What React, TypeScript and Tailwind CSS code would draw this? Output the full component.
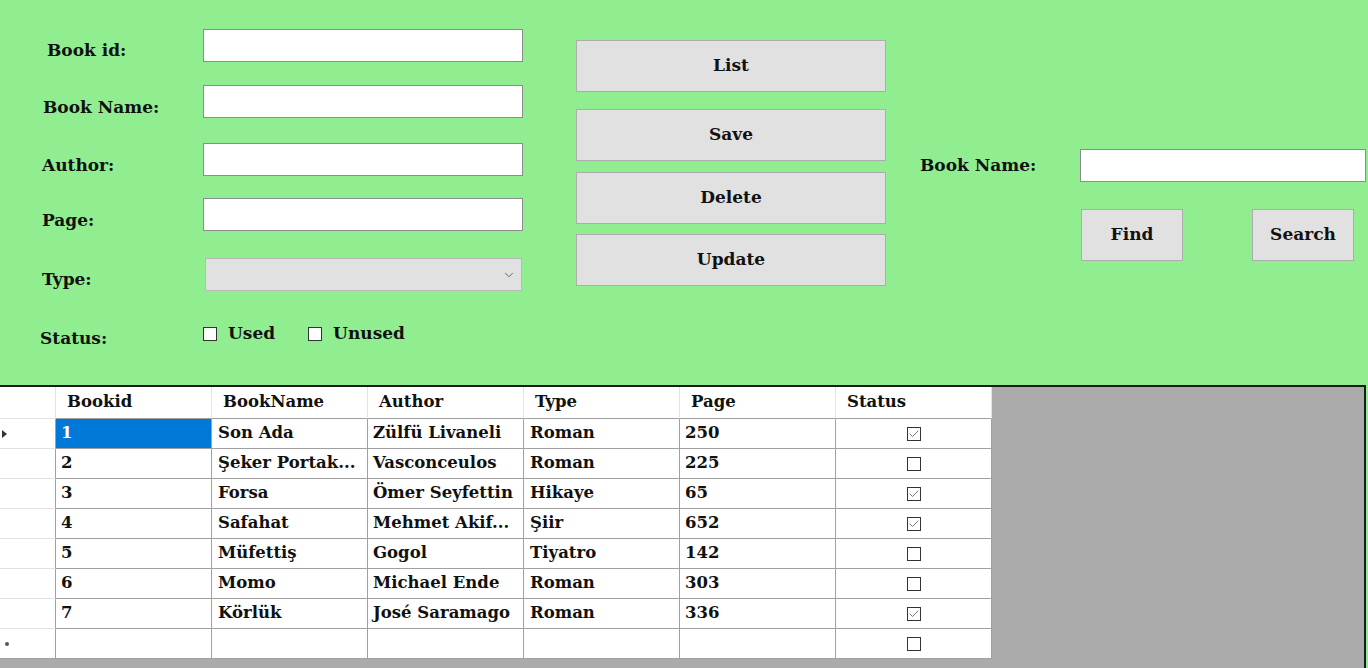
import { Check, ChevronDown } from 'lucide-react';

type Book = {
  id: string;
  name: string;
  author: string;
  type: string;
  page: string;
  used: boolean;
};

const books: Book[] = [
  { id: '1', name: 'Son Ada', author: 'Zülfü Livaneli', type: 'Roman', page: '250', used: true },
  { id: '2', name: 'Şeker Portak...', author: 'Vasconceulos', type: 'Roman', page: '225', used: false },
  { id: '3', name: 'Forsa', author: 'Ömer Seyfettin', type: 'Hikaye', page: '65', used: true },
  { id: '4', name: 'Safahat', author: 'Mehmet Akif...', type: 'Şiir', page: '652', used: true },
  { id: '5', name: 'Müfettiş', author: 'Gogol', type: 'Tiyatro', page: '142', used: false },
  { id: '6', name: 'Momo', author: 'Michael Ende', type: 'Roman', page: '303', used: false },
  { id: '7', name: 'Körlük', author: 'José Saramago', type: 'Roman', page: '336', used: true }
];

const font = "font-['DejaVu_Serif','Liberation_Serif',serif] font-bold";

function TextBox({ className = '' }: { className?: string }) {
  return <input type="text" className={`h-[33px] border border-[#8c8c8c] bg-white outline-none ${className}`} />;
}

function Button({ label, className = '' }: { label: string; className?: string }) {
  return (
    <button type="button" className={`h-[52px] border border-[#adadad] bg-[#e1e1e1] text-[17px] text-[#111] ${className}`}>
      {label}
    </button>
  );
}

function Box({ checked }: { checked: boolean }) {
  return (
    <span className="flex h-[14px] w-[14px] items-center justify-center border border-[#333] bg-white">
      {checked && <Check size={12} strokeWidth={1.6} className="text-[#555]" />}
    </span>
  );
}

function FormRow({ label, top, labelTop, labelLeft, children }: { label: string; top: string; labelTop: string; labelLeft: string; children: React.ReactNode }) {
  return (
    <div className={`flex ${top}`}>
      <div className={`w-[203px] leading-[22px] ${labelTop}`}>
        <span className={labelLeft}>{label}</span>
      </div>
      {children}
    </div>
  );
}

function BooksGrid() {
  const cell = 'h-[30px] border-r border-b border-[#a0a0a0] flex items-center truncate';
  return (
    <div className="h-[283px] w-[1366px] border-t-2 border-r-2 border-[#1a1a1a] bg-[#ababab]">
      <div className="grid w-[992px] grid-cols-[56px_repeat(6,156px)] text-[16.5px] text-[#111]">
        <div className="h-[32px] border-r border-b border-[#e2e2e2] bg-white" />
        {['Bookid', 'BookName', 'Author', 'Type', 'Page', 'Status'].map(h => (
          <div key={h} className="flex h-[32px] items-center border-r border-b border-[#a0a0a0] border-r-[#e2e2e2] bg-white pl-[11px]">
            {h}
          </div>
        ))}
        {books.map((b, i) => (
          <div key={b.id} className="contents">
            <div className="flex h-[30px] items-center border-r border-b border-[#a0a0a0] border-b-[#e2e2e2] bg-white pl-[2px]">
              {i === 0 && <span className="h-0 w-0 border-y-[4px] border-l-[5px] border-y-transparent border-l-[#333]" />}
            </div>
            <div className={`${cell} pl-[5px] ${i === 0 ? 'bg-[#0078d7] text-white' : 'bg-white'}`}>{b.id}</div>
            <div className={`${cell} bg-white pl-[6px]`}>{b.name}</div>
            <div className={`${cell} bg-white pl-[5px]`}>{b.author}</div>
            <div className={`${cell} bg-white pl-[6px]`}>{b.type}</div>
            <div className={`${cell} bg-white pl-[5px]`}>{b.page}</div>
            <div className={`${cell} justify-center bg-white`}>
              <Box checked={b.used} />
            </div>
          </div>
        ))}
        <div className="flex h-[30px] items-center border-r border-b border-[#a0a0a0] bg-white pl-[5px]">
          <span className="h-[4px] w-[4px] rounded-full bg-[#555]" />
        </div>
        {[0, 1, 2, 3, 4].map(k => (
          <div key={k} className="h-[30px] border-r border-b border-[#a0a0a0] bg-white" />
        ))}
        <div className="flex h-[30px] items-center justify-center border-r border-b border-[#a0a0a0] bg-white">
          <Box checked={false} />
        </div>
      </div>
    </div>
  );
}

export default function App() {
  return (
    <div className={`h-[668px] w-[1368px] overflow-hidden bg-[#90ee90] text-[17px] text-[#111] ${font}`}>
      <div className="flex h-[385px]">
        <div className="w-[523px]">
          <FormRow label="Book id:" top="mt-[29px]" labelTop="pt-[10px]" labelLeft="ml-[47px]">
            <TextBox className="w-[320px]" />
          </FormRow>
          <FormRow label="Book Name:" top="mt-[23px]" labelTop="pt-[11px]" labelLeft="ml-[43px]">
            <TextBox className="w-[320px]" />
          </FormRow>
          <FormRow label="Author:" top="mt-[25px]" labelTop="pt-[11px]" labelLeft="ml-[42px]">
            <TextBox className="w-[320px]" />
          </FormRow>
          <FormRow label="Page:" top="mt-[22px]" labelTop="pt-[11px]" labelLeft="ml-[42px]">
            <TextBox className="w-[320px]" />
          </FormRow>
          <FormRow label="Type:" top="mt-[27px]" labelTop="pt-[10px]" labelLeft="ml-[42px]">
            <div className="ml-[2px] flex h-[33px] w-[317px] items-center justify-end border border-[#b9b9b9] bg-[#e1e1e1] pr-[5px]">
              <ChevronDown size={14} strokeWidth={1.5} className="text-[#555]" />
            </div>
          </FormRow>
          <div className="mt-[24px] flex">
            <div className="w-[203px] pt-[12px] leading-[22px]">
              <span className="ml-[40px]">Status:</span>
            </div>
            <label className="mt-[8px] flex h-[22px] items-center">
              <Box checked={false} />
              <span className="ml-[11px]">Used</span>
            </label>
            <label className="mt-[8px] ml-[33px] flex h-[22px] items-center">
              <Box checked={false} />
              <span className="ml-[11px]">Unused</span>
            </label>
          </div>
        </div>

        <div className="ml-[53px] flex w-[310px] flex-col">
          <Button label="List" className="mt-[40px]" />
          <Button label="Save" className="mt-[17px]" />
          <Button label="Delete" className="mt-[11px]" />
          <Button label="Update" className="mt-[10px]" />
        </div>

        <div className="ml-[34px] flex flex-col">
          <div className="mt-[149px] flex items-center">
            <span className="w-[160px]">Book Name:</span>
            <TextBox className="w-[286px]" />
          </div>
          <div className="mt-[27px] ml-[161px] flex">
            <Button label="Find" className="w-[102px]" />
            <Button label="Search" className="ml-[69px] w-[102px]" />
          </div>
        </div>
      </div>
      <BooksGrid />
    </div>
  );
}
